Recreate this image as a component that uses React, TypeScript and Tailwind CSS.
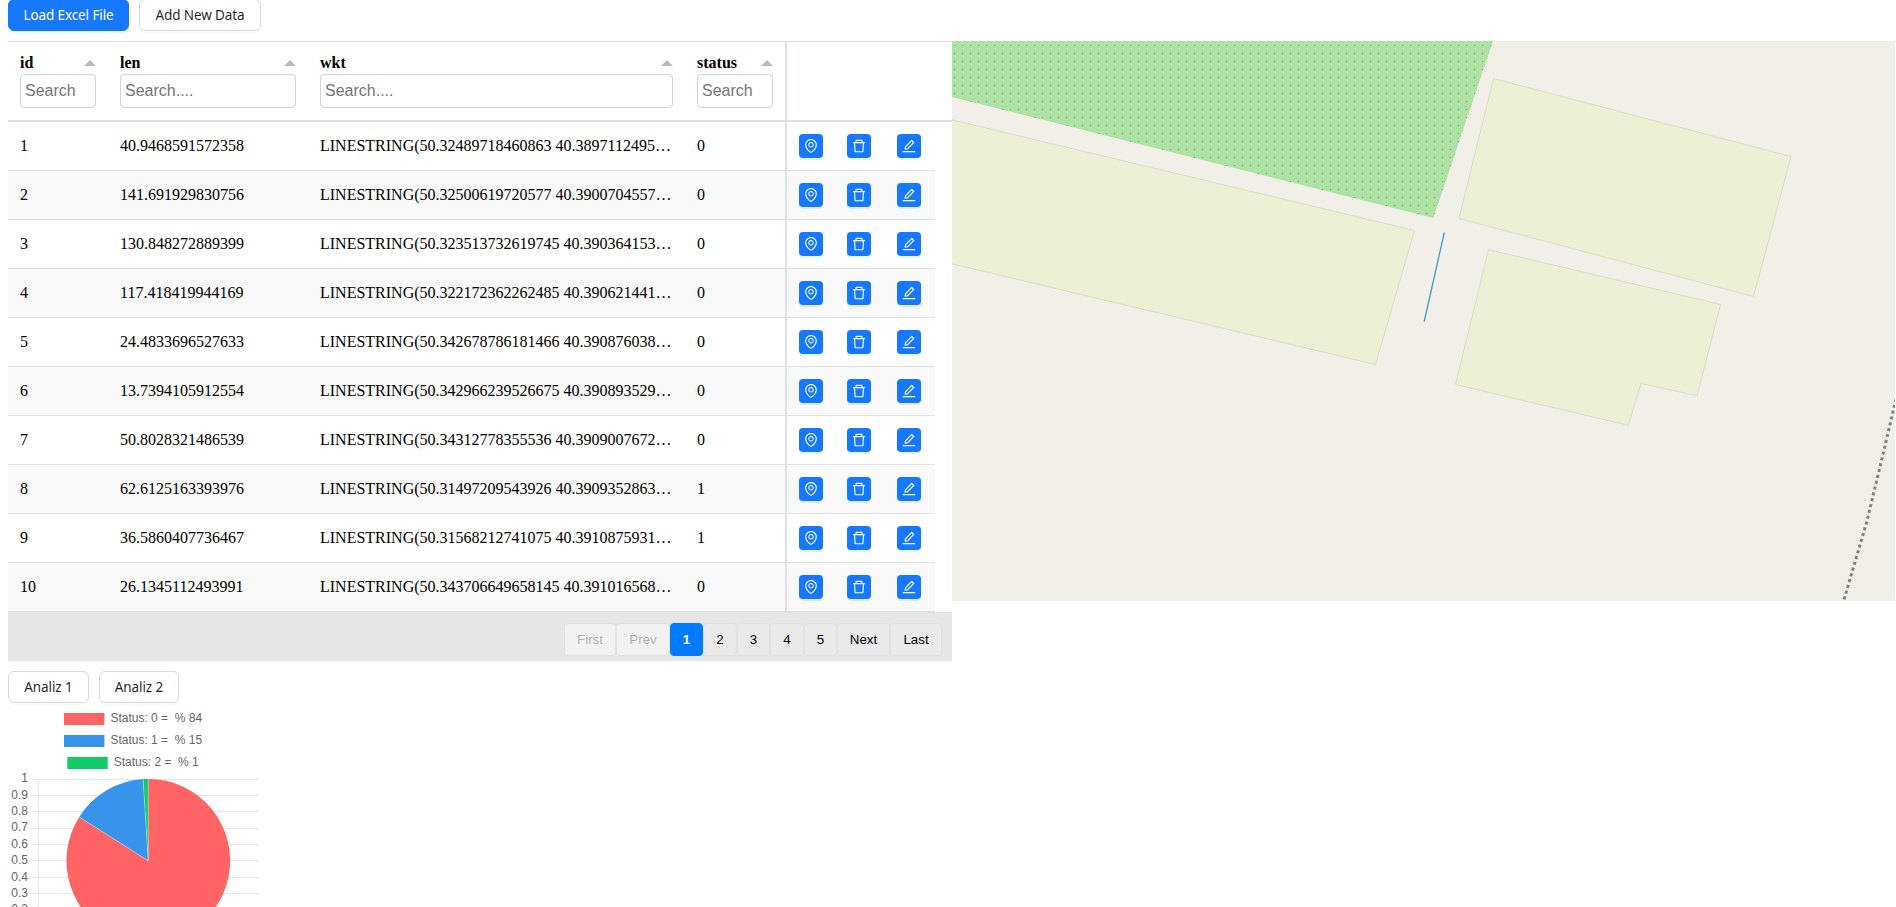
import React from "react";

const UI = "font-['Noto_Sans',sans-serif]";

const ROWS: [number, string, string, number][] = [
  [1, "40.9468591572358", "LINESTRING(50.32489718460863 40.3897112495…", 0],
  [2, "141.691929830756", "LINESTRING(50.32500619720577 40.3900704557…", 0],
  [3, "130.848272889399", "LINESTRING(50.323513732619745 40.390364153…", 0],
  [4, "117.418419944169", "LINESTRING(50.322172362262485 40.390621441…", 0],
  [5, "24.4833696527633", "LINESTRING(50.342678786181466 40.390876038…", 0],
  [6, "13.7394105912554", "LINESTRING(50.342966239526675 40.390893529…", 0],
  [7, "50.8028321486539", "LINESTRING(50.34312778355536 40.3909007672…", 0],
  [8, "62.6125163393976", "LINESTRING(50.31497209543926 40.3909352863…", 1],
  [9, "36.5860407736467", "LINESTRING(50.31568212741075 40.3910875931…", 1],
  [10, "26.1345112493991", "LINESTRING(50.343706649658145 40.391016568…", 0],
];

const COLS = "grid grid-cols-[100px_200px_377px_100px]";

function Button({ children, primary, className = "" }: { children: React.ReactNode; primary?: boolean; className?: string }) {
  const look = primary
    ? "bg-[#1677ff] text-white border-[#1677ff] shadow-[0_2px_0_rgba(5,145,255,0.1)]"
    : "bg-white text-black/[0.88] border-[#d9d9d9] shadow-[0_2px_0_rgba(0,0,0,0.02)]";
  return (
    <button className={`${UI} h-8 rounded-md border text-[13.5px] leading-[22px] tracking-[-0.1px] whitespace-nowrap ${look} ${className}`}>
      {children}
    </button>
  );
}

function IconButton({ label, children, className = "" }: { label: string; children: React.ReactNode; className?: string }) {
  return (
    <button
      aria-label={label}
      className={`flex size-6 items-center justify-center rounded bg-[#1677ff] text-white shadow-[0_2px_0_rgba(5,145,255,0.1)] ${className}`}
    >
      <svg viewBox="64 64 896 896" width="14" height="14" fill="currentColor">
        {children}
      </svg>
    </button>
  );
}

const Pin = () => (
  <path d="M854.6 289.1a362.49 362.49 0 00-79.9-115.7 370.83 370.83 0 00-118.2-77.8C610.7 76.6 562.1 67 512 67c-50.1 0-98.7 9.6-144.5 28.5-44.3 18.3-84 44.5-118.2 77.8A363.6 363.6 0 00169.4 289c-19.5 45-29.4 92.8-29.4 142 0 70.6 16.9 140.9 50.1 208.7 26.7 54.5 64 107.6 111 158.1 80.3 86.2 164.5 138.9 188.4 153a43.9 43.9 0 0022.4 6.1c7.8 0 15.5-2 22.4-6.1 23.9-14.1 108.1-66.8 188.4-153 47-50.4 84.3-103.6 111-158.1C867.1 572 884 501.8 884 431.1c0-49.2-9.9-97-29.4-142zM512 880.2c-65.9-41.9-300-207.8-300-449.1 0-77.9 31.1-151.1 87.6-206.3C356.3 169.5 431.7 139 512 139s155.7 30.5 212.4 85.9C780.9 280 812 353.2 812 431.1c0 241.3-234.1 407.2-300 449.1zm0-617.2c-97.2 0-176 78.8-176 176s78.8 176 176 176 176-78.8 176-176-78.8-176-176-176zm79.2 255.2A111.6 111.6 0 01512 551c-29.9 0-58-11.7-79.2-32.8A111.6 111.6 0 01400 439c0-29.9 11.7-58 32.8-79.2A111.6 111.6 0 01512 327c29.9 0 58 11.6 79.2 32.8A111.6 111.6 0 01624 439c0 29.9-11.7 58-32.8 79.2z" />
);
const Trash = () => (
  <path d="M360 184h-8c4.4 0 8-3.6 8-8v8h304v-8c0 4.4 3.6 8 8 8h-8v72h72v-80c0-35.3-28.7-64-64-64H352c-35.3 0-64 28.7-64 64v80h72v-72zm504 72H160c-17.7 0-32 14.3-32 32v32c0 4.4 3.6 8 8 8h60.4l24.7 523c1.6 34.1 29.8 61 63.9 61h454c34.2 0 62.3-26.8 63.9-61l24.7-523H888c4.4 0 8-3.6 8-8v-32c0-17.7-14.3-32-32-32zM731.3 840H292.7l-24.2-512h487l-24.2 512z" />
);
const Edit = () => (
  <path d="M257.7 752c2 0 4-.2 6-.5L431.9 722c2-.4 3.9-1.3 5.3-2.8l423.9-423.9a9.96 9.96 0 000-14.1L694.9 114.9c-1.9-1.9-4.4-2.9-7.1-2.9s-5.2 1-7.1 2.9L256.8 538.8c-1.5 1.5-2.4 3.3-2.8 5.3l-29.5 168.2a33.5 33.5 0 009.4 29.8c6.6 6.4 14.9 9.9 23.8 9.9zm67.4-174.4L687.8 215l73.3 73.3-362.7 362.6-88.9 15.7 15.6-89zM880 836H144c-17.7 0-32 14.3-32 32v36c0 4.4 3.6 8 8 8h784c4.4 0 8-3.6 8-8v-36c0-17.7-14.3-32-32-32z" />
);

function HeaderCell({ title, placeholder }: { title: string; placeholder: string }) {
  return (
    <div className="flex flex-col px-3 pt-[11px]">
      <div className="mb-px flex h-5 items-center justify-between">
        <span className="text-base leading-5 font-bold">{title}</span>
        <svg width="12" height="6" viewBox="0 0 12 6">
          <path d="M6 0L12 6H0z" fill="#bbb" />
        </svg>
      </div>
      <input
        placeholder={placeholder}
        className="h-[34px] w-full min-w-0 rounded border border-[#ced4da] px-1 font-['Liberation_Sans',Arial,sans-serif] text-base placeholder:text-[#757575]"
      />
    </div>
  );
}

function Table() {
  return (
    <section className="w-[944px] shrink-0 border-t border-[#dee2e6] font-['Liberation_Serif','Times_New_Roman',serif] text-base text-black">
      <div className="flex h-20 border-b-2 border-[#dee2e6]">
        <div className={`${COLS} w-[779px] border-r-2 border-[#dee2e6]`}>
          <HeaderCell title="id" placeholder="Search" />
          <HeaderCell title="len" placeholder="Search...." />
          <HeaderCell title="wkt" placeholder="Search...." />
          <HeaderCell title="status" placeholder="Search" />
        </div>
      </div>
      <div className="w-[927px]">
        {ROWS.map(([id, len, wkt, status]) => (
          <div key={id} className="flex h-[49px] border-b border-[#dee2e6] even:bg-[#f9f9f9]">
            <div className={`${COLS} w-[779px] items-center border-r-2 border-[#dee2e6]`}>
              <span className="px-3">{id}</span>
              <span className="px-3">{len}</span>
              <span className="px-3 whitespace-nowrap">{wkt}</span>
              <span className="px-3">{status}</span>
            </div>
            <div className="flex items-center pl-3">
              <IconButton label="Locate"><Pin /></IconButton>
              <IconButton label="Delete" className="ml-6"><Trash /></IconButton>
              <IconButton label="Edit" className="ml-[26px]"><Edit /></IconButton>
            </div>
          </div>
        ))}
      </div>
      <Pagination />
    </section>
  );
}

const PAGES: [string, string][] = [
  ["First", "w-[52px] text-black/30 bg-[#f2f2f2]"],
  ["Prev", "w-[54px] text-black/30 bg-[#f2f2f2]"],
  ["1", "w-[33px] border-[#007bff] bg-[#007bff] font-bold text-white"],
  ["2", "w-[34px] bg-[#eaeaea]"],
  ["3", "w-[33px] bg-[#eaeaea]"],
  ["4", "w-[34px] bg-[#eaeaea]"],
  ["5", "w-[33px] bg-[#eaeaea]"],
  ["Next", "w-[53px] bg-[#eaeaea]"],
  ["Last", "w-[52px] bg-[#eaeaea]"],
];

function Pagination() {
  return (
    <div className="flex h-[49px] items-start justify-end border-t border-[#dee2e6] bg-[#e6e6e6] pt-2.5 pr-2.5">
      {PAGES.map(([label, look]) => (
        <button
          key={label}
          className={`h-[33px] rounded border font-['Liberation_Sans',Arial,sans-serif] text-[13.33px] ${label === "1" ? "" : "border-[#dee2e6]"} ${look}`}
        >
          {label}
        </button>
      ))}
    </div>
  );
}

function MapView() {
  return (
    <svg width="943" height="560" viewBox="952 41 943 560" className="shrink-0 bg-[#f2efe9]">
      <defs>
        <pattern id="dots" x="954" y="45" width="8" height="8" patternUnits="userSpaceOnUse">
          <rect width="1" height="1" fill="#6ea26b" />
        </pattern>
      </defs>
      <path d="M952 41H1493L1433.3 218L952 97Z" fill="#aee1a4" />
      <path d="M952 41H1493L1433.3 218L952 97Z" fill="url(#dots)" />
      <g fill="#edf0d5" stroke="#dcddc6">
        <path d="M940 117L1414.5 230.5L1375.5 364.5L940 261Z" />
        <path d="M1493.5 78.5L1791 156.5L1753.5 296.5L1459 218.5Z" />
        <path d="M1488.5 249.7L1720.5 304.5L1697 395.7L1641 383.5L1628.3 425.3L1455.5 384.5Z" />
      </g>
      <path d="M1444.3 232.5L1424.2 321.5" stroke="#3399cc" strokeWidth="1.25" fill="none" />
      <path d="M1896 399L1880.3 465.7L1866.7 522L1843.3 602" stroke="#808080" strokeWidth="3" strokeDasharray="3 3" fill="none" />
    </svg>
  );
}

const LEGEND = [
  { text: "Status: 0 =  % 84", fill: "#ff6464", x: 56 },
  { text: "Status: 1 =  % 15", fill: "#3794eb", x: 56 },
  { text: "Status: 2 =  % 1", fill: "#10cb67", x: 59.3 },
];

const TICKS: [string, number, number][] = [
  ["1", 69, 72],
  ["0.9", 85, 89],
  ["0.8", 101, 105],
  ["0.7", 118, 121],
  ["0.6", 134, 138],
  ["0.5", 150, 154],
  ["0.4", 167, 171],
  ["0.3", 183, 187],
  ["0.2", 199, 203],
];

function PieChart() {
  return (
    <svg
      width="252"
      height="197"
      viewBox="0 0 252 197"
      className="font-['Liberation_Sans',Arial,sans-serif] text-[12px]"
      fill="#666"
    >
      {LEGEND.map((l, i) => (
        <g key={l.text}>
          <rect x={l.x} y={3 + i * 22} width="40.4" height="12" fill={l.fill} />
          <text x={l.x + 46.4} y={12 + i * 22} xmlSpace="preserve">{l.text}</text>
        </g>
      ))}
      {TICKS.map(([label, lineY, textY]) => (
        <g key={label}>
          <rect x="23" y={lineY} width="227" height="1" fill="#e5e5e5" />
          <text x="20" y={textY} textAnchor="end">{label}</text>
        </g>
      ))}
      <rect x="30" y="69" width="1" height="140" fill="#e5e5e5" />
      <g transform="translate(140.2 150.7)">
        <path d="M0 0V-81.8A81.8 81.8 0 1 1 -69 -43.8Z" fill="#ff6464" />
        <path d="M0 0L-69 -43.8A81.8 81.8 0 0 1 -5.1 -81.6Z" fill="#3794eb" />
        <path d="M0 0L-5.1 -81.6A81.8 81.8 0 0 1 0 -81.8Z" fill="#10cb67" />
        <path d="M0 0V-81.8M0 0L-69 -43.8M0 0L-5.1 -81.6" stroke="#fff" strokeOpacity="0.45" strokeWidth="0.7" />
      </g>
    </svg>
  );
}

export default function App() {
  return (
    <main className="h-[907px] w-full overflow-hidden bg-white pl-2">
      <div className="-mt-px flex gap-2.5">
        <Button primary className="w-[121px]">Load Excel File</Button>
        <Button className="w-[122px]">Add New Data</Button>
      </div>
      <div className="mt-2.5 flex h-[620px] items-start">
        <Table />
        <MapView />
      </div>
      <div className="mt-2.5 flex gap-2.5">
        <Button className="w-[81px]">Analiz 1</Button>
        <Button className="w-[80px]">Analiz 2</Button>
      </div>
      <div className="mt-[7px]">
        <PieChart />
      </div>
    </main>
  );
}
